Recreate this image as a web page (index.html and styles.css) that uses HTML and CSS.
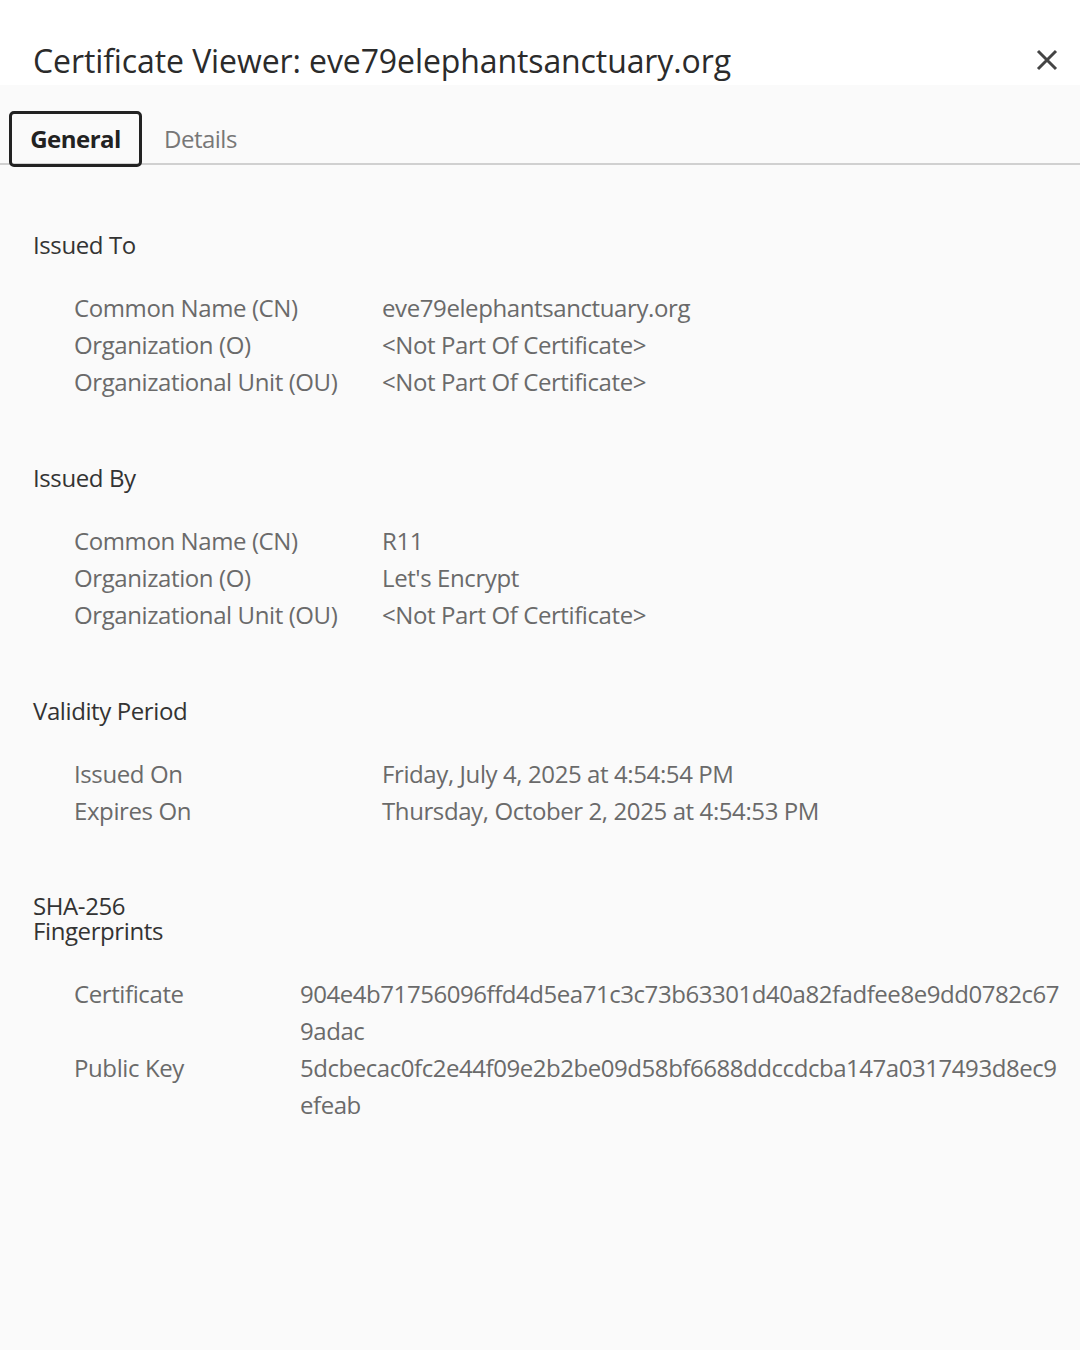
FILE: index.html
```html
<!DOCTYPE html>
<html lang="en">
   <head>
      <title>Certificate Viewer</title>
      <meta charset="UTF-8">
      <meta name="viewport" content="width=device-width, initial-scale=1.0">
      <link rel="stylesheet" href="styles.css">
   </head>
   <body>
      <header class="titlebar">
         <h1>Certificate Viewer: eve79elephantsanctuary.org</h1>
         <button class="close" aria-label="Close">
            <svg width="22" height="22" viewBox="0 0 22 22"><path d="M2 2 L20 20 M20 2 L2 20" stroke="#444" stroke-width="3" fill="none"/></svg>
         </button>
      </header>
      <nav class="tabs">
         <span class="tab active">General</span>
         <span class="tab">Details</span>
      </nav>
      <main class="content">
         <section class="group">
            <h2>Issued To</h2>
            <dl class="fields">
               <dt>Common Name (CN)</dt><dd>eve79elephantsanctuary.org</dd>
               <dt>Organization (O)</dt><dd>&lt;Not Part Of Certificate&gt;</dd>
               <dt>Organizational Unit (OU)</dt><dd>&lt;Not Part Of Certificate&gt;</dd>
            </dl>
         </section>
         <section class="group">
            <h2>Issued By</h2>
            <dl class="fields">
               <dt>Common Name (CN)</dt><dd>R11</dd>
               <dt>Organization (O)</dt><dd>Let's Encrypt</dd>
               <dt>Organizational Unit (OU)</dt><dd>&lt;Not Part Of Certificate&gt;</dd>
            </dl>
         </section>
         <section class="group">
            <h2>Validity Period</h2>
            <dl class="fields">
               <dt>Issued On</dt><dd>Friday, July 4, 2025 at 4:54:54 PM</dd>
               <dt>Expires On</dt><dd>Thursday, October 2, 2025 at 4:54:53 PM</dd>
            </dl>
         </section>
         <section class="group prints">
            <h2>SHA-256 Fingerprints</h2>
            <dl class="fields hashes">
               <dt>Certificate</dt><dd>904e4b71756096ffd4d5ea71c3c73b63301d40a82fadfee8e9dd0782c67<br>9adac</dd>
               <dt>Public Key</dt><dd>5dcbecac0fc2e44f09e2b2be09d58bf6688ddccdcba147a0317493d8ec9<br>efeab</dd>
            </dl>
         </section>
      </main>
   </body>
</html>
```

FILE: styles.css
```css
*
{ box-sizing:border-box;}
html
{ background-color:#fafafa;}
body
{ margin:0;
  font-family:"Open Sans", "Noto Sans", sans-serif;
  color:#333;}
.titlebar
{ background-color:#fff;
  height:85px;
  padding:37px 22px 0 33px;
  display:flex;
  justify-content:space-between;
  align-items:center;}
.titlebar h1
{ margin:0;
  font-size:32px;
  font-weight:normal;
  line-height:40px;
  letter-spacing:-0.1px;
  color:#2b2b2b;}
.close
{ border:none;
  background:none;
  padding:0;
  width:22px;
  height:22px;
  margin-top:-3px;}
.tabs
{ margin-top:26px;
  height:54px;
  padding-left:9px;
  display:flex;
  align-items:flex-start;
  gap:22px;
  border-bottom:2px solid #d0d0d0;}
.tab
{ font-size:24px;
  line-height:56px;
  color:#777;
  letter-spacing:-0.5px;}
.tab.active
{ width:133px;
  height:56px;
  line-height:50px;
  text-align:center;
  font-weight:bold;
  color:#222;
  border:3px solid #222;
  border-radius:5px;}
.content
{ padding:61px 20px 0 33px;}
.group
{ margin-bottom:59px;}
.group h2
{ margin:0 0 26px;
  font-size:24px;
  font-weight:normal;
  line-height:37px;
  letter-spacing:-0.4px;
  color:#333;}
.fields
{ margin:0;
  padding-left:41px;
  display:grid;
  grid-template-columns:308px 1fr;
  font-size:24px;
  line-height:37px;
  letter-spacing:-0.4px;
  color:#6a6a6a;}
.fields dt, .fields dd
{ margin:0;}
.prints
{ margin-top:64px;}
.prints h2
{ width:150px;
  line-height:25px;
  margin-bottom:32px;}
.hashes
{ grid-template-columns:226px 1fr;}
.hashes dd
{ white-space:nowrap;
  letter-spacing:-0.45px;}
```
